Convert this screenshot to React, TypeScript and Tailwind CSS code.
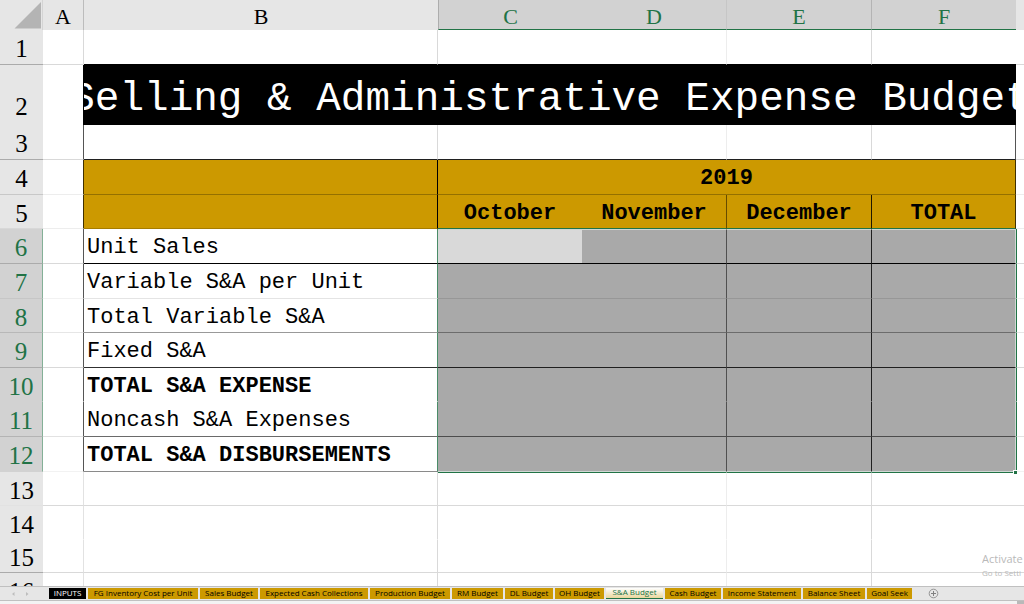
import React from "react";

const GRID = "border-[#d9d9d9]";
const FAINT = "border-[#ededed]";

type Row = {
  n: number;
  label: string;
  bold?: boolean;
  height: string;
  labelLine: string;
  cellLine: string;
  gridLine: string;
  headLine: string;
};

const rows: Row[] = [
  { n: 6, label: "Unit Sales", height: "h-[35px]", labelLine: "border-b-black", cellLine: "border-b-black", gridLine: "border-b-[#d9d9d9]", headLine: "border-b-[#ababab]" },
  { n: 7, label: "Variable S&A per Unit", height: "h-[35px]", labelLine: "border-b-[#e4e4e4]", cellLine: "border-b-[#979797]", gridLine: "border-b-[#f2f2f2]", headLine: "border-b-[#c6c6c6]" },
  { n: 8, label: "Total Variable S&A", height: "h-[34px]", labelLine: "border-b-[#999999]", cellLine: "border-b-[#6c6c6c]", gridLine: "border-b-[#e6e6e6]", headLine: "border-b-[#b8b8b8]" },
  { n: 9, label: "Fixed S&A", height: "h-[35px]", labelLine: "border-b-[#303030]", cellLine: "border-b-[#202020]", gridLine: "border-b-[#d9d9d9]", headLine: "border-b-[#ababab]" },
  { n: 10, label: "TOTAL S&A EXPENSE", bold: true, height: "h-[34px]", labelLine: "border-b-white", cellLine: "border-b-[#a9a9a9]", gridLine: "border-b-white", headLine: "border-b-[#d2d2d2]" },
  { n: 11, label: "Noncash S&A Expenses", height: "h-[35px]", labelLine: "border-b-[#6a6a6a]", cellLine: "border-b-[#4c4c4c]", gridLine: "border-b-[#e2e2e2]", headLine: "border-b-[#b4b4b4]" },
  { n: 12, label: "TOTAL S&A DISBURSEMENTS", bold: true, height: "h-[35px]", labelLine: "border-b-[#8a8a8a]", cellLine: "border-b-[#cfd8d3]", gridLine: "border-b-[#f2f2f2]", headLine: "border-b-[#d2d2d2]" },
];

const tabs = [
  { name: "INPUTS", look: "w-[37px] bg-black text-white" },
  { name: "FG Inventory Cost per Unit", look: "w-[110px] bg-[#cc9900]" },
  { name: "Sales Budget", look: "w-[58px] bg-[#cc9900]" },
  { name: "Expected Cash Collections", look: "w-[108px] bg-[#cc9900]" },
  { name: "Production Budget", look: "w-[80px] bg-[#cc9900]" },
  { name: "RM Budget", look: "w-[51px] bg-[#cc9900]" },
  { name: "DL Budget", look: "w-[48px] bg-[#cc9900]" },
  { name: "OH Budget", look: "w-[49px] bg-[#cc9900]" },
  { name: "S&A Budget", look: "w-[57px] border-b border-[#217346] bg-linear-to-b from-white to-[#ead79c] text-[#217346]" },
  { name: "Cash Budget", look: "w-[56px] bg-[#cc9900]" },
  { name: "Income Statement", look: "w-[78px] bg-[#cc9900]" },
  { name: "Balance Sheet", look: "w-[62px] bg-[#cc9900]" },
  { name: "Goal Seek", look: "w-[45px] bg-[#cc9900]" },
];

function RowHead({ n, look }: { n: number; look: string }) {
  return (
    <th scope="row" className={`border-b p-0 text-center font-['Liberation_Serif',serif] text-[25px] leading-7 font-normal ${n === 2 ? "pt-6" : "pt-1"} ${look}`}>
      {n}
    </th>
  );
}

function Sheet() {
  const plainHead = "bg-[#e6e6e6] text-black";
  return (
    <table className="w-full table-fixed border-separate border-spacing-0">
      <colgroup>
        <col className="w-[43px]" />
        <col className="w-[41px]" />
        <col className="w-[354px]" />
        <col className="w-[144px]" />
        <col className="w-[145px]" />
        <col className="w-[145px]" />
        <col className="w-[144px]" />
        <col />
      </colgroup>
      <thead>
        <tr className="h-[30px] bg-[#e6e6e6] font-['Liberation_Serif',serif] text-[22px] leading-6">
          <th className="border-r border-[#d4d4d4] p-0">
            <svg viewBox="0 0 42 30" className="block h-[30px] w-[42px]" aria-label="Select all">
              <path d="M41 2V28.500H14.500Z" fill="#b4b4b4" />
            </svg>
          </th>
          <th scope="col" className="border-r border-[#bcbcbc] p-0 pt-1 font-normal">A</th>
          <th scope="col" className="p-0 pt-1 font-normal">B</th>
          <th scope="col" className="border-b border-l border-b-[#217346] border-l-[#adadad] bg-[#d2d2d2] p-0 pt-1 font-normal text-[#217346]">C</th>
          <th scope="col" className="border-r border-b border-r-[#c6c6c6] border-b-[#217346] bg-[#d2d2d2] p-0 pt-1 font-normal text-[#217346]">D</th>
          <th scope="col" className="border-r border-b border-r-[#b4b4b4] border-b-[#217346] bg-[#d2d2d2] p-0 pt-1 font-normal text-[#217346]">E</th>
          <th scope="col" className="border-b border-b-[#217346] bg-[#d2d2d2] p-0 pt-1 font-normal text-[#217346]">F</th>
          <th className="p-0" />
        </tr>
      </thead>
      <tbody>
        <tr className="h-[35px]">
          <RowHead n={1} look={`${plainHead} border-b-[#ababab]`} />
          <td className={`border-r border-b p-0 ${GRID}`} />
          <td className="border-r border-b border-r-[#d9d9d9] border-b-black p-0" />
          <td className="border-b border-b-black p-0" />
          <td className="border-r border-b border-r-[#ededed] border-b-black p-0" />
          <td className="border-r border-b border-r-[#d9d9d9] border-b-black p-0" />
          <td className="border-b border-b-black p-0" />
          <td className={`border-b p-0 ${GRID}`} />
        </tr>
        <tr className="h-[60px]">
          <RowHead n={2} look={`${plainHead} border-b-[#e6e6e6]`} />
          <td className="border-r border-r-black p-0" />
          <td colSpan={5} className="overflow-hidden bg-black p-0 text-white">
            <div className="flex h-[60px] items-center justify-center overflow-hidden pt-2 text-[41px] leading-none whitespace-nowrap">
              <h1>Selling &amp; Administrative Expense Budget</h1>
            </div>
          </td>
          <td className="p-0" />
        </tr>
        <tr className="h-[35px]">
          <RowHead n={3} look={`${plainHead} border-b-[#ababab]`} />
          <td className="border-r border-b border-r-[#555555] border-b-[#d9d9d9] p-0" />
          <td className="border-r border-b border-r-[#d9d9d9] border-b-[#202020] p-0" />
          <td className="border-b border-b-[#202020] p-0" />
          <td className="border-r border-b border-r-[#ededed] border-b-[#202020] p-0" />
          <td className="border-r border-b border-r-[#d9d9d9] border-b-[#202020] p-0" />
          <td className="border-r border-b border-r-[#555555] border-b-[#202020] p-0" />
          <td className={`border-b p-0 ${GRID}`} />
        </tr>
        <tr className="h-[35px]">
          <RowHead n={4} look={`${plainHead} border-b-[#c8c8c8]`} />
          <td className="border-r border-b border-r-[#403000] border-b-[#ededed] p-0" />
          <td className="border-r border-b border-r-black border-b-[#947000] bg-[#cc9900] p-0" />
          <th colSpan={4} className="border-r border-b border-r-[#403000] border-b-[#947000] bg-[#cc9900] p-0 pt-1 text-[22px] leading-7 font-bold">
            2019
          </th>
          <td className={`border-b p-0 ${FAINT}`} />
        </tr>
        <tr className="h-[34px] text-[22px] leading-7">
          <RowHead n={5} look={`${plainHead} border-b-[#d8d8d8]`} />
          <td className="border-r border-b border-r-[#403000] border-b-[#ededed] p-0" />
          <td className="border-r border-b border-r-black border-b-[#a67d00] bg-[#cc9900] p-0" />
          <th scope="col" className="border-b border-b-[#217346] bg-[#cc9900] p-0 pt-1 font-bold">October</th>
          <th scope="col" className="border-r border-b border-r-[#664c00] border-b-[#217346] bg-[#cc9900] p-0 pt-1 font-bold">November</th>
          <th scope="col" className="border-r border-b border-r-[#201800] border-b-[#217346] bg-[#cc9900] p-0 pt-1 font-bold">December</th>
          <th scope="col" className="border-r border-b border-r-[#403000] border-b-[#217346] bg-[#cc9900] p-0 pt-1 font-bold">TOTAL</th>
          <td className={`border-b p-0 ${FAINT}`} />
        </tr>
        {rows.map((r) => {
          const first = r.n === 6;
          const top = first ? "border-t border-t-[#d0d8d3]" : "";
          return (
            <tr key={r.n} className={r.height}>
              <RowHead n={r.n} look={`border-r border-r-[#84b097] bg-[#d2d2d2] text-[#217346] ${r.headLine}`} />
              <td className={`border-r border-b border-r-[#555555] p-0 ${r.gridLine}`} />
              <td className={`border-r border-b border-r-[#4a8c68] p-0 pt-1 pl-[3px] text-[22px] leading-7 whitespace-nowrap ${r.bold ? "font-bold" : ""} ${r.labelLine}`}>
                {r.label}
              </td>
              <td className={`border-b p-0 ${first ? "bg-[#d9d9d9]" : "bg-[#a9a9a9]"} ${top} ${r.cellLine}`} />
              <td className={`border-r border-b border-r-[#505050] bg-[#a9a9a9] p-0 ${top} ${r.cellLine}`} />
              <td className={`border-r border-b border-r-[#202020] bg-[#a9a9a9] p-0 ${top} ${r.cellLine}`} />
              <td className={`relative border-r border-b border-r-[#d0d8d3] bg-[#a9a9a9] p-0 ${top} ${r.cellLine}`}>
                {r.n === 12 && <span className="absolute -right-[2px] -bottom-[3px] z-10 size-[4px] border-t border-l border-white bg-[#217346]" />}
              </td>
              <td className={`border-b border-l border-l-[#217346] p-0 ${r.gridLine}`} />
            </tr>
          );
        })}
        {[
          { n: 13, height: "h-[34px]", line: "border-b-[#d9d9d9]", head: "border-b-[#e2e2e2]" },
          { n: 14, height: "h-[34px]", line: "border-b-white", head: "border-b-[#e6e6e6]" },
          { n: 15, height: "h-[33px]", line: "border-b-[#d9d9d9]", head: "border-b-[#ababab]" },
          { n: 16, height: "h-[35px]", line: "border-b-[#d9d9d9]", head: "border-b-[#ababab]" },
        ].map((r) => {
          const top = r.n === 13 ? "border-t border-t-[#217346]" : "";
          return (
            <tr key={r.n} className={r.height}>
              <RowHead n={r.n} look={`${plainHead} ${r.head}`} />
              <td className={`border-r border-b border-r-[#e2e2e2] p-0 ${r.line}`} />
              <td className={`border-r border-b border-r-[#d9d9d9] p-0 ${r.line}`} />
              <td className={`border-b p-0 ${top} ${r.line}`} />
              <td className={`border-r border-b border-r-[#ededed] p-0 ${top} ${r.line}`} />
              <td className={`border-r border-b border-r-[#d9d9d9] p-0 ${top} ${r.line}`} />
              <td className={`border-b p-0 ${top} ${r.line}`} />
              <td className={`border-b p-0 ${r.line}`} />
            </tr>
          );
        })}
      </tbody>
    </table>
  );
}

export default function App() {
  return (
    <div className="flex h-screen flex-col overflow-hidden bg-white font-['Liberation_Mono',monospace] text-black">
      <main className="relative min-h-0 flex-1 overflow-hidden">
        <Sheet />
        <div className="absolute right-0 bottom-[7px] w-[42px] overflow-hidden font-['Open_Sans',sans-serif] whitespace-nowrap text-[#b9b9b9]">
          <p className="text-[11px] leading-4">Activate</p>
          <p className="text-[8px] leading-3">Go to Setti</p>
        </div>
      </main>
      <footer className="shrink-0 font-['Open_Sans',sans-serif]">
        <nav className="flex h-[15px] items-start border-t border-b border-[#c0c0c0] bg-[#e6e6e6] pt-px" aria-label="Sheets">
          <div className="flex h-3 w-[49px] shrink-0 items-center gap-2 pl-[10px]">
            <button type="button" aria-label="Previous sheet" className="flex">
              <svg viewBox="0 0 6 6" className="size-[6px]"><path d="M4.500 1V5L2 3Z" fill="#bdbdbd" /></svg>
            </button>
            <button type="button" aria-label="Next sheet" className="flex">
              <svg viewBox="0 0 6 6" className="size-[6px]"><path d="M2 1V5L4.500 3Z" fill="#bdbdbd" /></svg>
            </button>
          </div>
          <div className="flex gap-[2px]">
            {tabs.map((t) => (
              <button key={t.name} type="button" className={`flex h-[11px] shrink-0 items-center justify-center pb-[2px] text-[8px] leading-none whitespace-nowrap ${t.look}`}>
                {t.name}
              </button>
            ))}
          </div>
          <button type="button" aria-label="New sheet" className="ml-4 flex">
            <svg viewBox="0 0 11 11" className="size-[11px]" fill="none" stroke="#808080">
              <circle cx="5.500" cy="5.500" r="4.300" strokeWidth="0.800" />
              <path d="M5.500 3V8M3 5.500H8" />
            </svg>
          </button>
        </nav>
        <div className="flex h-[3px] justify-end bg-[#f3f3f3]">
          <span className="w-[7px] bg-[#b9b9b9]" />
        </div>
      </footer>
    </div>
  );
}
